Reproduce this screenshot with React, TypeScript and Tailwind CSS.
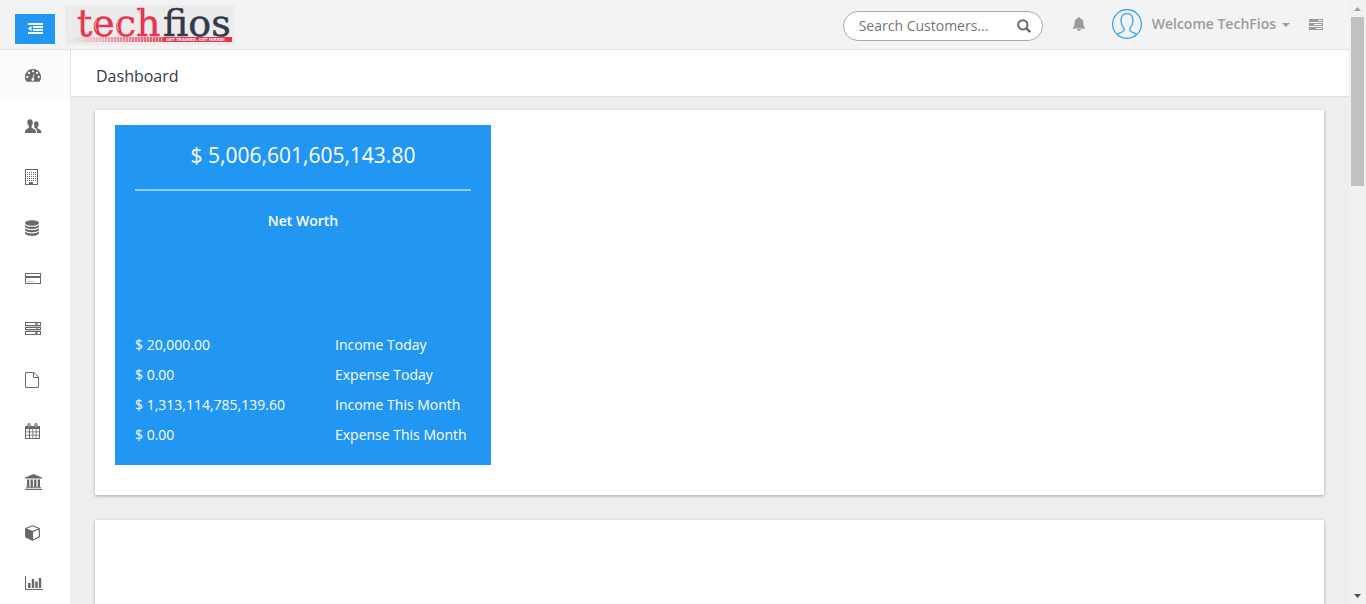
import React from "react";

const DARK = "#67686c";

function IndentIcon() {
  return (
    <svg width="15" height="12" viewBox="0 0 15 12" fill="#fff" aria-hidden="true">
      <path d="M0 0h15v2H0zM5 3h10v2H5zM5 6h10v2H5zM0 9h15v2H0zM0 5.500 3.500 2.800v5.400z" />
    </svg>
  );
}

function TachometerIcon() {
  return (
    <svg width="16" height="13" viewBox="0 0 1792 1456" fill="#6f6668" aria-hidden="true">
      <path
        fillRule="evenodd"
        d="M896 0a896 896 0 0 0-755 1379q23 37 67 37h1376q44 0 67-37A896 896 0 0 0 896 0zM256 768a128 128 0 1 1 0 256 128 128 0 0 1 0-256zM448 320a128 128 0 1 1 0 256 128 128 0 0 1 0-256zM896 128a128 128 0 1 1 0 256 128 128 0 0 1 0-256zM1344 320a128 128 0 1 1 0 256 128 128 0 0 1 0-256zM1536 768a128 128 0 1 1 0 256 128 128 0 0 1 0-256zM1004 559q24 6 37 28t7 48l-101 382q57 29 80 90t0 124q-30 73-97 95t-134-8q-75-48-78-130t46-128q35-33 83-43l101-382q6-26 19-52t37-24z"
      />
    </svg>
  );
}

function UsersIcon() {
  return (
    <svg width="17" height="15" viewBox="0 0 17 15" fill={DARK} aria-hidden="true">
      <path d="M5 .3c1.800 0 2.800 1.200 2.800 3 0 1.700-.5 2.800-1.200 3.700v1.700c1.500.8 4.400 1.700 4.400 3.800V14H0v-1.500c0-2.100 2.600-3 3.900-3.800V7C3 6.100 2.300 5 2.300 3.300 2.300 1.500 3.200.3 5 .3z" />
      <path d="M11.200 2.300c1.500 0 2.400 1 2.400 2.600 0 1.400-.4 2.300-1 3v1.500c1.500.8 3.800 1.600 3.800 3.400V14h-4.300v-1.700c0-1.900-1.400-2.900-3.100-3.700V8l.8-.4C9.200 6.900 9 6 9 4.900c0-1.600.8-2.600 2.200-2.600z" />
    </svg>
  );
}

function BuildingIcon() {
  return (
    <svg width="13" height="16" viewBox="0 0 13 16" fill={DARK} aria-hidden="true">
      <path fillRule="evenodd" d="M0 0h13v16H0zM1 1v14h11V1z" />
      <path d="M4 13h4v2H4z" />
      <path
        d="M2 3.500h9M2 5.500h9M2 7.500h9M2 9.500h9M2 11.500h9"
        fill="none"
        stroke={DARK}
        strokeWidth="1"
        strokeDasharray="1 1"
      />
    </svg>
  );
}

function DatabaseIcon() {
  return (
    <svg width="14" height="16" viewBox="0 0 14 16" fill={DARK} aria-hidden="true">
      <ellipse cx="7" cy="3" rx="7" ry="2.800" />
      <path d="M0 5c1.200 1.300 4 1.800 7 1.800S12.800 6.300 14 5v1.300C14 7.800 11 9 7 9S0 7.800 0 6.300z" />
      <path d="M0 8.300c1.200 1.300 4 1.800 7 1.800s5.800-.5 7-1.800v1.300c0 1.500-3 2.700-7 2.700S0 11.100 0 9.600z" />
      <path d="M0 11.600c1.200 1.300 4 1.800 7 1.800s5.800-.5 7-1.800v1.500C14 14.700 11 16 7 16s-7-1.300-7-2.900z" />
    </svg>
  );
}

function CardIcon() {
  return (
    <svg width="16" height="11" viewBox="0 0 16 11" fill={DARK} aria-hidden="true">
      <path fillRule="evenodd" d="M0 0h16v11H0zM1 1v2h14V1zM1 5v5h14V5z" />
      <path d="M2 8h3v1H2zM6 8h3v1H6z" opacity=".4" />
    </svg>
  );
}

function ServerIcon() {
  return (
    <svg width="16" height="13" viewBox="0 0 16 13" fill={DARK} aria-hidden="true">
      <path fillRule="evenodd" d="M0 0h16v4H0zM1 1v2h14V1zM0 5h16v3H0zM1 6v1h14V6zM0 9h16v4H0zM1 10v2h14v-2z" />
      <path d="M10 1h3v2h-3zM11 6h2v1h-2zM10 10h3v2h-3z" opacity=".7" />
      <path d="M0 4h16v1H0zM0 8h16v1H0z" opacity=".35" />
    </svg>
  );
}

function FileIcon() {
  return (
    <svg width="14" height="16" viewBox="0 0 14 16" fill="none" stroke={DARK} aria-hidden="true">
      <path d="M1 .5h8L13.500 5v10q0 .5-.5.5H1q-.5 0-.5-.5V1Q.5.5 1 .5z" />
      <path d="M8.500.5v4.500q0 .5.5.5h4.500" />
    </svg>
  );
}

function CalendarIcon() {
  return (
    <svg width="15" height="16" viewBox="0 0 15 16" fill={DARK} aria-hidden="true">
      <path fillRule="evenodd" d="M0 3h15v13H0zM1 6v2.500h3V6zM5 6v2.500h2.500V6zM8.300 6v2.500h2.400V6zM11.500 6v2.500H14V6zM1 9.300v2.400h3V9.300zM5 9.300v2.400h2.500V9.300zM8.300 9.300v2.400h2.400V9.300zM11.500 9.300v2.400H14V9.300zM1 12.500V15h3v-2.500zM5 12.500V15h2.500v-2.500zM8.300 12.500V15h2.400v-2.500zM11.500 12.500V15H14v-2.500z" />
      <rect x="2.800" y=".5" width="2.400" height="4" rx="1" fill="#aaa" stroke={DARK} strokeWidth=".8" />
      <rect x="9.800" y=".5" width="2.400" height="4" rx="1" fill="#aaa" stroke={DARK} strokeWidth=".8" />
    </svg>
  );
}

function BankIcon() {
  return (
    <svg width="17" height="16" viewBox="0 0 17 16" fill={DARK} aria-hidden="true">
      <path d="M8.500 0 17 3.500v1H0v-1zM2 5.500h2.300V13H2zM5.600 5.500h2.300V13H5.600zM9.100 5.500h2.300V13H9.100zM12.700 5.500H15V13h-2.300zM1 12.800h15v1H1zM0 14.800h17V16H0z" />
    </svg>
  );
}

function CubeIcon() {
  return (
    <svg width="15" height="16" viewBox="0 0 15 16" aria-hidden="true">
      <path d="M7.500.8 14.300 3.500v8.400l-6.800 3.400L.7 11.900V3.500z" fill="#fff" stroke={DARK} strokeWidth="1.200" strokeLinejoin="round" />
      <path d="M.7 3.700 7.500 6.500v8.800L.7 11.900z" fill={DARK} />
      <path d="M.7 3.700 7.500 6.500l6.800-2.800M7.500 6.500v8.800" fill="none" stroke={DARK} strokeWidth="1.200" />
    </svg>
  );
}

function ChartIcon() {
  return (
    <svg width="18" height="14" viewBox="0 0 18 14" fill={DARK} aria-hidden="true">
      <path d="M0 0h1v13h17v1H0zM3 7h2.500v5H3zM6.800 3h2.400v9H6.800zM10.300 5.500h2.400V12h-2.400zM13.800 2h2.400v10h-2.400z" />
    </svg>
  );
}

const NAV = [
  { label: "Dashboard", Icon: TachometerIcon, row: "h-[51px] bg-[#fcfcfc]" },
  { label: "Customers", Icon: UsersIcon, row: "h-[50px]" },
  { label: "Companies", Icon: BuildingIcon, row: "h-[51px] pt-px" },
  { label: "Transactions", Icon: DatabaseIcon, row: "h-[51px] pt-px" },
  { label: "Sales", Icon: CardIcon, row: "h-[50px]" },
  { label: "Services", Icon: ServerIcon, row: "h-[50px]" },
  { label: "Documents", Icon: FileIcon, row: "h-[51px] pt-0.5" },
  { label: "Calendar", Icon: CalendarIcon, row: "h-[51px] pt-0.5" },
  { label: "Bank & Cash", Icon: BankIcon, row: "h-[51px] pt-0.5" },
  { label: "Products", Icon: CubeIcon, row: "h-[51px] pt-0.5" },
  { label: "Reports", Icon: ChartIcon, row: "h-[50px] pt-0.5" },
];

const TOTALS = [
  ["$ 20,000.00", "Income Today"],
  ["$ 0.00", "Expense Today"],
  ["$ 1,313,114,785,139.60", "Income This Month"],
  ["$ 0.00", "Expense This Month"],
];

function Logo() {
  return (
    <svg className="overflow-visible" width="170" height="40" viewBox="0 0 170 40" role="img" aria-label="techfios">
      <defs>
        <linearGradient id="fade" x1="0" x2="1">
          <stop offset="0" stopColor="#e8354f" stopOpacity="0" />
          <stop offset="1" stopColor="#e8354f" stopOpacity=".9" />
        </linearGradient>
        <pattern id="ribs" width="3" height="8" patternUnits="userSpaceOnUse">
          <rect x="0" width="1" height="8" fill="#ebebeb" fillOpacity=".6" />
        </pattern>
      </defs>
      <rect width="170" height="40" fill="#ebebeb" />
      <g fontFamily="'DejaVu Serif', serif" fontSize="38" strokeWidth=".5">
        <text x="12" y="31" fill="#e8354f" stroke="#e8354f">
          tech
        </text>
        <text x="98" y="31" fill="#333a4d" stroke="#333a4d">
          fios
        </text>
      </g>
      <g stroke="#ebebeb" strokeWidth=".8" fill="none" opacity=".75">
        <path d="M19.500 11v15M31.500 15q-3 6 0 11M53.500 15q-3 6 0 11M75.500 4v25M106.500 8v21M120.500 14v15M133.500 15q-3 6 0 11M146 15q3 6 0 11M157 15l7 8" />
      </g>
      <rect x="2" y="32" width="98" height="5" fill="url(#fade)" />
      <rect x="2" y="32" width="98" height="5" fill="url(#ribs)" />
      <rect x="99" y="32" width="68" height="5" fill="#e8354f" />
      <text x="101" y="36" fontFamily="'DejaVu Sans', sans-serif" fontWeight="700" fontSize="4" fill="#fff">
        GET TRAINED. GET HIRED!
      </text>
    </svg>
  );
}

function AvatarIcon() {
  return (
    <svg width="30" height="30" viewBox="0 0 30 30" fill="none" stroke="#2196f3" aria-hidden="true">
      <circle cx="15" cy="15" r="14.400" strokeWidth="1.100" />
      <path
        d="M5.500 25.500c1.200-1.400 5.300-2.100 6.200-3.600.5-1 .3-2.300 0-3.200-1.700-1.700-2.500-4-2.600-6.400C8.900 7.500 10.500 4.500 15 4.500s6.100 3 5.900 7.800c-.1 2.400-.9 4.700-2.600 6.400-.3.900-.5 2.200 0 3.200.9 1.500 5 2.200 6.200 3.600"
        strokeWidth="1.600"
        opacity=".75"
      />
    </svg>
  );
}

function Header() {
  return (
    <header className="flex h-[50px] shrink-0 items-start border-b border-[#e3e3e3] bg-[#f3f3f3]">
      <button aria-label="Toggle menu" className="mt-3.5 ml-[15px] flex h-[30px] w-10 items-center justify-center bg-[#2196f3]">
        <IndentIcon />
      </button>
      <a href="#" className="mt-[5px] ml-2.5">
        <Logo />
      </a>
      <div className="ml-auto flex h-12 items-center pr-[26px] text-[#999c9e]">
        <form className="mt-1 flex h-[30px] w-[200px] items-center rounded-full border border-[#a9a9a9] bg-white pr-[11px] pl-[15px]">
          <input
            type="text"
            aria-label="Search Customers"
            placeholder="Search Customers..."
            className="min-w-0 flex-1 bg-transparent text-sm text-[#555] outline-none placeholder:text-[#757575]"
          />
          <button type="button" aria-label="Search">
            <svg width="14" height="14" viewBox="0 0 14 14" fill="none" stroke="#616b6b" strokeWidth="2" aria-hidden="true">
              <circle cx="5.800" cy="5.800" r="4.600" />
              <path d="m9.200 9.200 4 4" strokeWidth="2.400" />
            </svg>
          </button>
        </form>
        <button aria-label="Notifications" className="ml-[29px]">
          <svg width="14" height="14" viewBox="0 0 14 14" fill="currentColor" aria-hidden="true">
            <path d="M7 0q1 0 1 1.200C10.300 1.700 11.300 3.500 11.300 5.500c0 3 .9 4.800 2.500 6H.2c1.600-1.200 2.500-3 2.500-6 0-2 1-3.800 3.300-4.300Q6 0 7 0zM5.200 12h3.600Q8.500 14 7 14t-1.800-2z" />
          </svg>
        </button>
        <button className="ml-[26px] flex items-center text-sm font-semibold">
          <AvatarIcon />
          <span className="ml-2.5">Welcome TechFios</span>
          <svg className="mt-0.5 ml-1.5" width="8" height="4" viewBox="0 0 8 4" fill="currentColor" aria-hidden="true">
            <path d="M0 0h8L4 4z" />
          </svg>
        </button>
        <button aria-label="Activity" className="ml-[19px]">
          <svg width="14" height="11" viewBox="0 0 14 11" fill="currentColor" aria-hidden="true">
            <path fillRule="evenodd" d="M0 0h14v3H0zM9 1v1h4V1zM0 4h14v3H0zM5 5v1h8V5zM0 8h14v3H0zM7 9v1h6V9z" />
          </svg>
        </button>
      </div>
    </header>
  );
}

function NetWorthTile() {
  return (
    <section className="flex h-[340px] w-[376px] flex-col bg-[#2196f3] px-5 text-white">
      <div className="flex h-[66px] items-center justify-center border-b-2 border-white/50 pb-0.5 text-[21px]">$ 5,006,601,605,143.80</div>
      <h2 className="mt-5 text-center text-sm leading-5 font-semibold">Net Worth</h2>
      <table className="mt-auto mb-[15px] w-full table-fixed text-left text-sm">
        <tbody>
          {TOTALS.map(([amount, label]) => (
            <tr key={label} className="h-[30px]">
              <td className="w-[200px] p-0">{amount}</td>
              <th scope="row" className="p-0 font-normal whitespace-nowrap">
                {label}
              </th>
            </tr>
          ))}
        </tbody>
      </table>
    </section>
  );
}

function ScrollRail() {
  return (
    <div aria-hidden="true" className="flex w-[17px] shrink-0 flex-col items-center bg-[#f1f1f1]">
      <svg className="h-[17px] shrink-0" width="13" height="17" viewBox="0 0 13 17" fill="#a3a3a3">
        <path d="M6.500 7 10 11H3z" />
      </svg>
      <div className="h-[28%] w-[13px] bg-[#c1c1c1]" />
      <svg className="mt-auto shrink-0" width="13" height="17" viewBox="0 0 13 17" fill="#505050">
        <path d="M6.500 11 10 7H3z" />
      </svg>
    </div>
  );
}

const CARD = "shrink-0 bg-white shadow-[0_1px_3px_rgba(0,0,0,0.3)]";

export default function App() {
  return (
    <div className="flex h-screen overflow-hidden bg-[#eeeeee] font-['Open_Sans','Noto_Sans',sans-serif]">
      <div className="flex min-w-0 flex-1 flex-col">
        <Header />
        <div className="flex min-h-0 flex-1">
          <nav className="w-[70px] shrink-0 overflow-hidden bg-white">
            {NAV.map(({ label, Icon, row }) => (
              <a key={label} href="#" aria-label={label} className={`flex items-center pl-[25px] ${row}`}>
                <Icon />
              </a>
            ))}
          </nav>
          <main className="flex min-w-0 flex-1 flex-col overflow-hidden">
            <div className="flex h-[47px] shrink-0 items-center border-b border-l border-[#e1e1e1] bg-white pt-1.5 pl-[25px]">
              <h1 className="text-base text-[#2f3b4a]">Dashboard</h1>
            </div>
            <div className="flex flex-col gap-[25px] pt-[13px] pr-[25px] pl-[25px]">
              <div className={`${CARD} px-5 pt-[15px] pb-[30px]`}>
                <NetWorthTile />
              </div>
              <div className={`${CARD} h-[385px]`} />
            </div>
          </main>
        </div>
      </div>
      <ScrollRail />
    </div>
  );
}
